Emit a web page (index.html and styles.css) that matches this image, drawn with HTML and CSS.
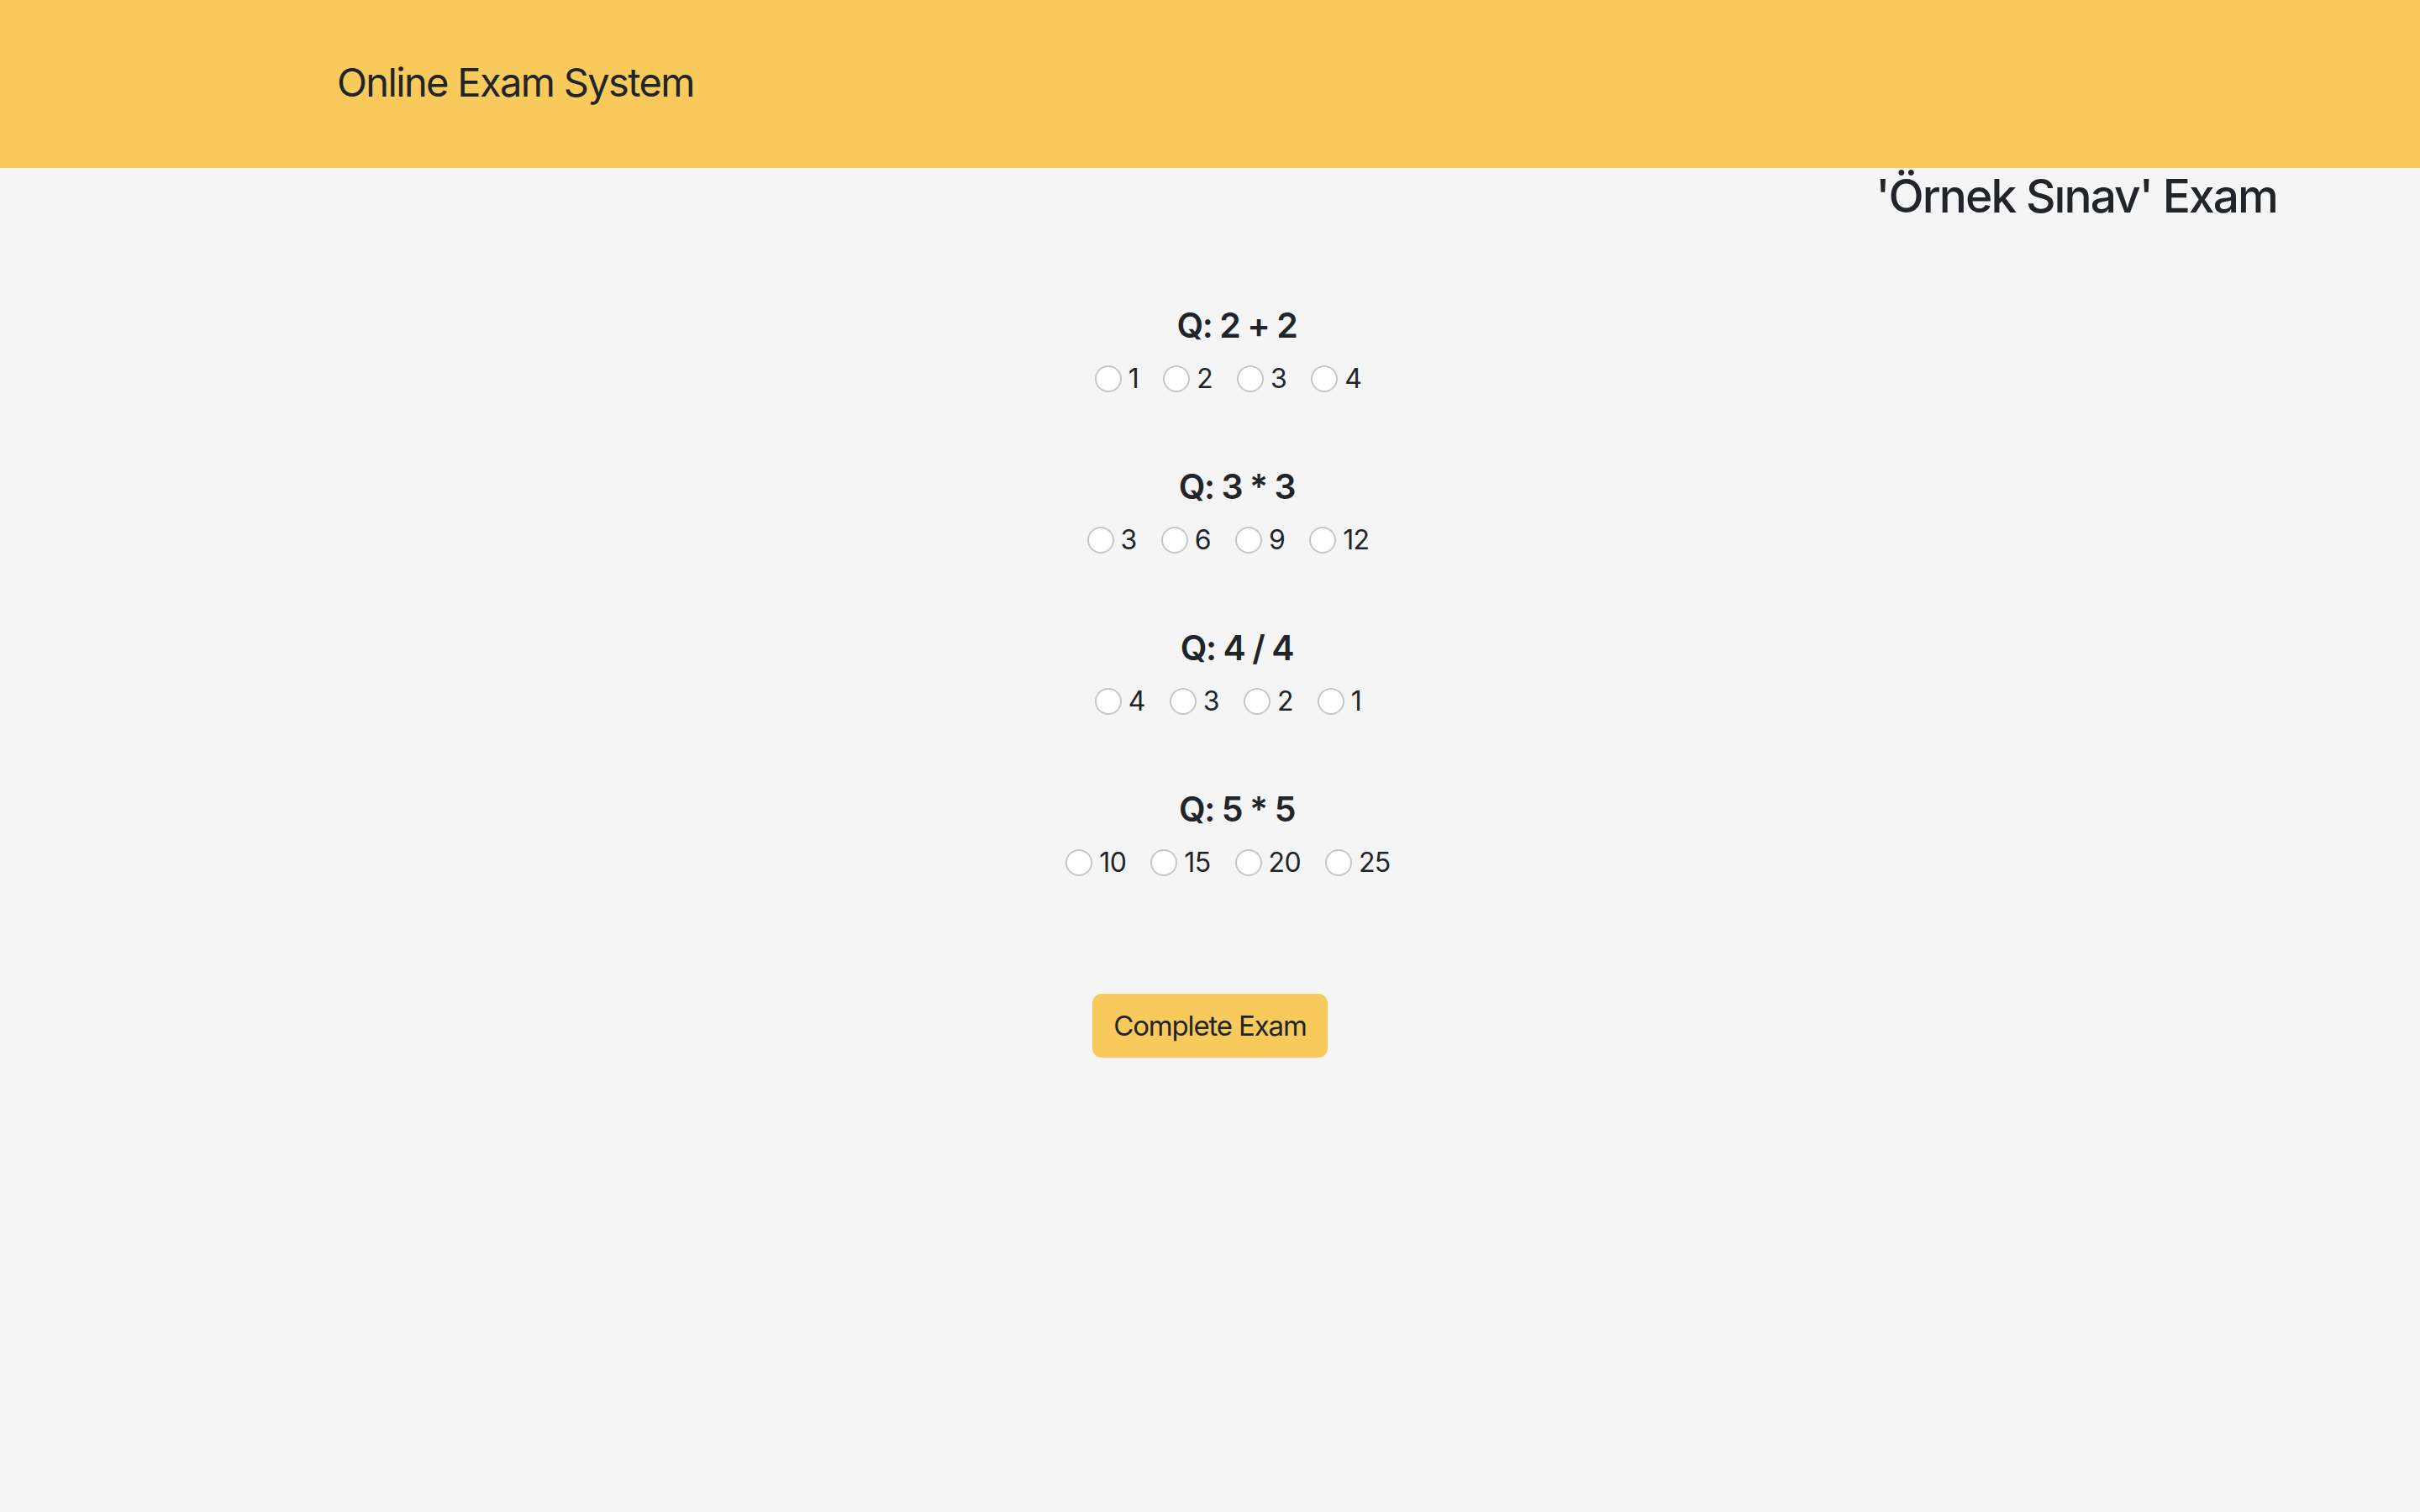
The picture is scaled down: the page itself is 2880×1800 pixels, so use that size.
FILE: index.html
```html
<!DOCTYPE html>
<html lang="en">
<head>
<meta charset="utf-8">
<title>Online Exam System</title>
<link rel="stylesheet" href="styles.css">
</head>
<body>
<header class="topbar">
  <div class="brand">Online Exam System</div>
</header>
<main class="page">
  <h2 class="exam-title">'Örnek Sınav' Exam</h2>
  <form class="exam">
    <div class="questions">
      <div class="question">
        <h4 class="question-title">Q: 2 + 2</h4>
        <div class="options">
          <label class="option"><input type="radio" name="q1"><span>1</span></label>
          <label class="option"><input type="radio" name="q1"><span>2</span></label>
          <label class="option"><input type="radio" name="q1"><span>3</span></label>
          <label class="option"><input type="radio" name="q1"><span>4</span></label>
        </div>
      </div>
      <div class="question">
        <h4 class="question-title">Q: 3 * 3</h4>
        <div class="options">
          <label class="option"><input type="radio" name="q2"><span>3</span></label>
          <label class="option"><input type="radio" name="q2"><span>6</span></label>
          <label class="option"><input type="radio" name="q2"><span>9</span></label>
          <label class="option"><input type="radio" name="q2"><span>12</span></label>
        </div>
      </div>
      <div class="question">
        <h4 class="question-title">Q: 4 / 4</h4>
        <div class="options">
          <label class="option"><input type="radio" name="q3"><span>4</span></label>
          <label class="option"><input type="radio" name="q3"><span>3</span></label>
          <label class="option"><input type="radio" name="q3"><span>2</span></label>
          <label class="option"><input type="radio" name="q3"><span>1</span></label>
        </div>
      </div>
      <div class="question">
        <h4 class="question-title">Q: 5 * 5</h4>
        <div class="options">
          <label class="option"><input type="radio" name="q4"><span>10</span></label>
          <label class="option"><input type="radio" name="q4"><span>15</span></label>
          <label class="option"><input type="radio" name="q4"><span>20</span></label>
          <label class="option"><input type="radio" name="q4"><span>25</span></label>
        </div>
      </div>
    </div>
    <div class="actions">
      <button type="submit" class="btn-complete">Complete Exam</button>
    </div>
  </form>
</main>
</body>
</html>
```

FILE: styles.css
```css
* { box-sizing: border-box; }

html, body {
  margin: 0;
  padding: 0;
}

body {
  background: #f5f5f5;
  color: #212529;
  font-family: Inter, "Noto Sans", "Liberation Sans", sans-serif;
  min-height: 1800px;
}

.topbar {
  background: #f7ca5b;
  height: 200px;
  padding: 74px 0 0 401px;
}

.brand {
  font-size: 47px;
  line-height: 1;
  font-weight: 400;
  letter-spacing: -0.035em;
}

.page {
  display: flex;
  flex-direction: column;
}

.exam-title {
  margin: 6px 0 0;
  padding-right: 170px;
  text-align: right;
  font-size: 55px;
  line-height: 1;
  font-weight: 500;
  letter-spacing: -0.035em;
}

.exam {
  display: flex;
  flex-direction: column;
  margin-top: 106px;
}

.questions {
  display: flex;
  flex-direction: column;
  gap: 92px;
  padding-left: 64px;
}

.question {
  display: flex;
  flex-direction: column;
  align-items: center;
  gap: 27px;
}

.question-title {
  margin: 0;
  font-size: 41px;
  line-height: 41px;
  font-weight: 600;
  letter-spacing: -0.035em;
}

.options {
  display: flex;
  justify-content: center;
  align-items: center;
  gap: 8px;
  height: 32px;
}

.option {
  display: flex;
  align-items: center;
  gap: 8px;
  margin-right: 21px;
  font-size: 32px;
  line-height: 1;
  letter-spacing: -0.02em;
}

.option input {
  appearance: none;
  -webkit-appearance: none;
  margin: 0;
  width: 32px;
  height: 32px;
  border-radius: 50%;
  border: 2px solid #c6c6c6;
  background: #ffffff;
}

.actions {
  display: flex;
  justify-content: center;
  margin-top: 140px;
}

.btn-complete {
  background: #f7ca5b;
  color: #212529;
  border: none;
  border-radius: 11px;
  width: 280px;
  height: 76px;
  padding: 0;
  font-family: inherit;
  font-size: 33px;
  font-weight: 400;
  letter-spacing: -0.035em;
}
```
